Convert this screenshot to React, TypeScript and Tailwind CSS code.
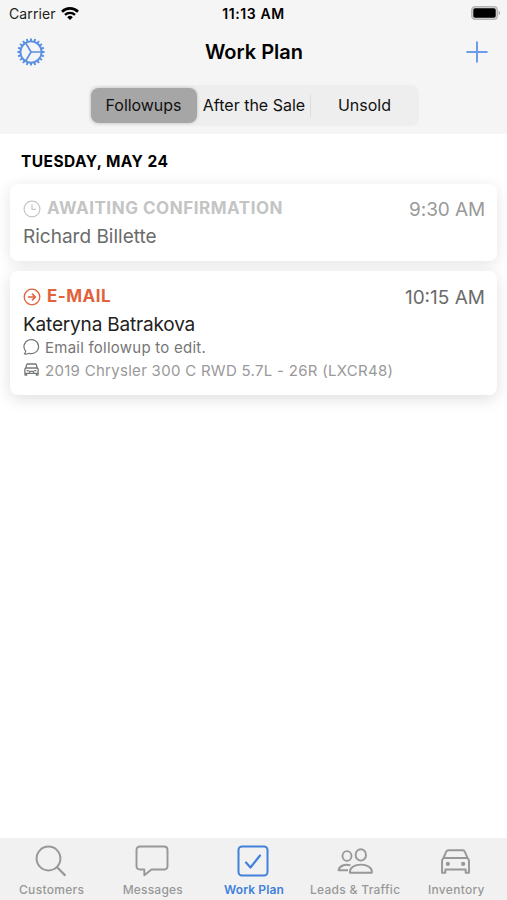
import type { ReactNode } from "react";

type IconProps = { className?: string };

const TEETH = Array.from({ length: 20 }, (_, i) => i * 18);

function GearIcon() {
  return (
    <svg viewBox="0 0 28 28" className="size-7" fill="none" stroke="currentColor">
      <circle cx="14" cy="14" r="10.6" strokeWidth="1.9" />
      {TEETH.map((deg) => (
        <path
          key={deg}
          d="M14 3V.4"
          strokeWidth="2"
          transform={`rotate(${deg} 14 14)`}
        />
      ))}
      <path d="M14 14h10.5M14 14L8.6 4.7M14 14l-5.4 9.3" strokeWidth="1.7" />
    </svg>
  );
}

function PlusIcon() {
  return (
    <svg
      viewBox="0 0 22 22"
      className="size-[22px]"
      stroke="currentColor"
      strokeWidth="2"
      strokeLinecap="round"
    >
      <path d="M11 1.2v19.6M1.2 11h19.6" />
    </svg>
  );
}

function WifiIcon() {
  return (
    <svg viewBox="0 0 18 13" className="h-[13px] w-[18px]" fill="none" stroke="#000">
      <path d="M1 4.7a11.4 11.4 0 0 1 16 0" strokeWidth="2.6" />
      <path d="M4 7.9a7.2 7.2 0 0 1 10 0" strokeWidth="2.4" />
      <path d="M9 13L6.2 10.2a4 4 0 0 1 5.6 0z" fill="#000" stroke="none" />
    </svg>
  );
}

function BatteryIcon() {
  return (
    <svg viewBox="0 0 30 14" className="h-[14px] w-[30px]">
      <rect x=".7" y=".7" width="25.6" height="12.6" rx="3.4" fill="#d4d4d4" stroke="#b4b4b4" strokeWidth="1.3" />
      <rect x="2.3" y="2.3" width="22.4" height="9.4" rx="1.8" fill="#000" />
      <path d="M27.6 4.8c2 .7 2 3.7 0 4.4z" fill="#a9a9a9" />
    </svg>
  );
}

function ClockIcon() {
  return (
    <svg viewBox="0 0 18 18" className="size-[18px]" fill="none" stroke="currentColor" strokeWidth="1.2">
      <circle cx="9" cy="9" r="7.9" />
      <path d="M9 4.3V9.4h3.8" />
    </svg>
  );
}

function ArrowCircleIcon() {
  return (
    <svg viewBox="0 0 18 18" className="size-[18px]" fill="none" stroke="currentColor" strokeWidth="1.3">
      <circle cx="9" cy="9" r="7.8" />
      <path d="M5.4 9h7M9.4 6.2L12.4 9l-3 2.8" strokeWidth="1.6" strokeLinecap="round" strokeLinejoin="round" />
    </svg>
  );
}

function BubbleIcon() {
  return (
    <svg viewBox="0 0 18 18" className="size-[18px]" fill="none" stroke="currentColor" strokeWidth="1.2" strokeLinejoin="round">
      <path d="M1.3 15.9c1-.9 1.4-1.8 1.3-2.9A7.3 7 0 1 1 6.2 15.3c-1.4.7-3.1.9-4.9.6z" />
    </svg>
  );
}

function CarIcon({ className }: IconProps) {
  return (
    <svg viewBox="0 0 28 24" className={className} fill="none" stroke="currentColor" strokeLinejoin="round">
      <path d="M1 10.8v12h3.2v-3h19.600v3H27v-12L25.600 8.600H2.400z" strokeWidth="1.9" />
      <path d="M2.400 8.600L4.900 2.800Q5.600 1.200 7.200 1.200h13.600q1.600 0 2.300 1.600l2.500 5.800" strokeWidth="1.9" />
      <circle cx="6.600" cy="14.300" r="2" fill="currentColor" stroke="none" />
      <circle cx="21.400" cy="14.300" r="2" fill="currentColor" stroke="none" />
    </svg>
  );
}

function SmallCarIcon() {
  return (
    <svg viewBox="0 0 15 13" className="h-[13px] w-[15px]" fill="none" stroke="currentColor" strokeWidth="1.3" strokeLinejoin="round">
      <path d="M1.800 5L2.700 1.700Q2.900 1 3.700 1h7.600q.8 0 1 .7L13.200 5" />
      <path d="M.9 6L1.800 5h11.400l.9 1V10.300H.9z" />
      <path d="M2.600 7.600h2.200M10.200 7.600h2.200M5.400 10V8.400h4.200V10" strokeWidth="1.1" />
      <path d="M1.100 10.300v1.900h1.500v-1.900M12.400 10.300v1.900h1.500v-1.900" />
    </svg>
  );
}

function SearchIcon() {
  return (
    <svg viewBox="0 0 32 32" className="size-8" fill="none" stroke="currentColor" strokeWidth="2">
      <circle cx="13.5" cy="13.5" r="11.9" />
      <path d="M21.8 22l8.6 8.6" strokeWidth="2.2" />
    </svg>
  );
}

function MessageIcon() {
  return (
    <svg viewBox="0 0 34 32" className="h-8 w-[34px]" fill="none" stroke="currentColor" strokeWidth="1.9" strokeLinejoin="round">
      <path d="M5 1.5h24q3.5 0 3.5 3.5v16q0 3.5-3.5 3.5H16.5L9.3 30.2V24.5H5q-3.5 0-3.5-3.5V5q0-3.5 3.5-3.5z" />
    </svg>
  );
}

function CheckboxIcon() {
  return (
    <svg viewBox="0 0 32 32" className="size-8" fill="none" stroke="currentColor">
      <rect x="1.5" y="1.5" width="29" height="29" rx="3.5" strokeWidth="2" />
      <path d="M9 17.5l4.5 5L23 10.5" strokeWidth="2.2" strokeLinecap="round" strokeLinejoin="round" />
    </svg>
  );
}

function PeopleIcon() {
  return (
    <svg viewBox="0 0 36 26" className="h-[26px] w-9" fill="none" stroke="currentColor" strokeWidth="1.9" strokeLinejoin="round">
      <ellipse cx="10" cy="8" rx="4.5" ry="4.9" />
      <path d="M13.500 17.300c-5.500-1.700-11.300.6-12 4.900h9.500" />
      <ellipse cx="23.8" cy="6.900" rx="5.2" ry="5.7" />
      <path d="M13 24.800c-.9-5 5-8.200 10.900-8.200s11.800 3.200 10.900 8.200z" />
    </svg>
  );
}

const segments = [
  { label: "Followups", style: "w-[106px] h-[35px] rounded-lg bg-[#a6a6a6] shadow-[0_0_3px_rgba(0,0,0,0.25)] tracking-[-0.05px]" },
  { label: "After the Sale", style: "w-[113px] pl-[2px]" },
  { label: "Unsold", style: "w-[108px]" },
];

type Tab = { label: string; icon: ReactNode; active?: boolean; text: string };

const tabs: Tab[] = [
  { label: "Customers", icon: <SearchIcon />, text: "tracking-[0.29px]" },
  { label: "Messages", icon: <MessageIcon />, text: "tracking-[0.2px]" },
  { label: "Work Plan", icon: <CheckboxIcon />, active: true, text: "tracking-[0.1px]" },
  { label: "Leads & Traffic", icon: <PeopleIcon />, text: "tracking-[0.29px]" },
  { label: "Inventory", icon: <CarIcon className="h-[25px] w-[29px]" />, text: "tracking-[0.29px]" },
];

function StatusBar() {
  return (
    <div className="grid h-[26px] grid-cols-3 items-center pl-[9px] pr-[6px] text-[14px]">
      <div className="flex items-center gap-[5px]">
        <span className="tracking-[0.1px] text-[#222]">Carrier</span>
        <WifiIcon />
      </div>
      <span className="pr-[3px] text-center font-semibold tracking-[0.6px]">11:13 AM</span>
      <div className="flex justify-end">
        <BatteryIcon />
      </div>
    </div>
  );
}

function Header() {
  return (
    <header className="h-[134px] shrink-0 bg-[#f5f5f5]">
      <StatusBar />
      <div className="mt-[2px] flex h-12 items-center justify-between pl-[17px] pr-[19px]">
        <button className="text-[#5b90e3]">
          <GearIcon />
        </button>
        <h1 className="pr-[3px] text-[20px] font-semibold">Work Plan</h1>
        <button className="text-[#6b9cea]">
          <PlusIcon />
        </button>
      </div>
      <div className="mx-auto mt-[9px] flex h-[41px] w-[330px] items-center rounded-lg bg-[#eeeeee] pl-[2px] text-[16px]">
        {segments.map((s, i) => (
          <div key={s.label} className="flex items-center">
            {i === 2 && <div className="h-[22px] w-px bg-[#dcdcdc]" />}
            <button className={`flex items-center justify-center whitespace-nowrap text-[#111] ${s.style}`}>
              <span className="pb-[2px]">{s.label}</span>
            </button>
          </div>
        ))}
      </div>
    </header>
  );
}

function TaskList() {
  return (
    <main className="flex-1 bg-white px-[10px]">
      <h2 className="flex h-[50px] items-center pl-[11px] pt-[5px] text-[15.5px] font-bold tracking-[0.45px]">
        TUESDAY, MAY 24
      </h2>
      <section className="h-[77px] rounded-lg bg-white pl-[13px] pr-[12px] pt-[12px] shadow-[0_3px_16px_rgba(0,0,0,0.11)]">
        <div className="flex h-[26px] items-center justify-between">
          <div className="flex items-center gap-[6px] text-[#c4c4c4]">
            <ClockIcon />
            <span className="text-[17px] font-bold tracking-[0.53px]">AWAITING CONFIRMATION</span>
          </div>
          <span className="pt-[2px] text-[19px] tracking-[-0.1px] text-[#999]">9:30 AM</span>
        </div>
        <p className="pt-px text-[19px] leading-7 text-[#6b6b6b]">Richard Billette</p>
      </section>

      <section className="relative mt-[10px] h-[124px] rounded-lg bg-white pl-[13px] pr-[12px] pt-[13px] shadow-[0_4px_16px_rgba(0,0,0,0.13)]">
        <div className="flex h-[26px] items-center justify-between">
          <div className="flex items-center gap-[6px] text-[#e2623c]">
            <ArrowCircleIcon />
            <span className="text-[17px] font-bold tracking-[0.5px]">E-MAIL</span>
          </div>
          <span className="pt-[2px] text-[19px] text-[#6b6b6b]">10:15 AM</span>
        </div>
        <p className="pt-px text-[19px] leading-7 tracking-[-0.18px] text-[#222]">Kateryna Batrakova</p>
        <div className="-mt-[2px] flex h-[22px] items-center gap-[4px] text-[15px] text-[#767676]">
          <span className="pb-[2px]">
            <BubbleIcon />
          </span>
          <span className="pt-px tracking-[0.24px]">Email followup to edit.</span>
        </div>
        <div className="flex h-6 items-center gap-[6px] pl-[1px] text-[15px] text-[#777]">
          <span className="pb-[3px]">
            <SmallCarIcon />
          </span>
          <span className="pt-px tracking-[0.29px] text-[#999]">2019 Chrysler 300 C RWD 5.7L - 26R (LXCR48)</span>
        </div>
      </section>
    </main>
  );
}

function TabBar() {
  return (
    <nav className="grid h-[62px] shrink-0 grid-cols-5 bg-[#f1f1f1] pl-px">
      {tabs.map((t) => (
        <button
          key={t.label}
          className={`flex flex-col items-center pt-[7px] text-[12px] ${
            t.active ? "font-semibold text-[#4280dc]" : "font-medium text-[#989898]"
          }`}
        >
          <span className="flex h-8 items-center pr-px">{t.icon}</span>
          <span className={`mt-[5px] whitespace-nowrap leading-4 ${t.text}`}>{t.label}</span>
        </button>
      ))}
    </nav>
  );
}

export default function App() {
  return (
    <div className="flex h-[900px] w-[507px] flex-col overflow-hidden bg-white font-[Inter,sans-serif] text-black">
      <Header />
      <TaskList />
      <TabBar />
    </div>
  );
}
